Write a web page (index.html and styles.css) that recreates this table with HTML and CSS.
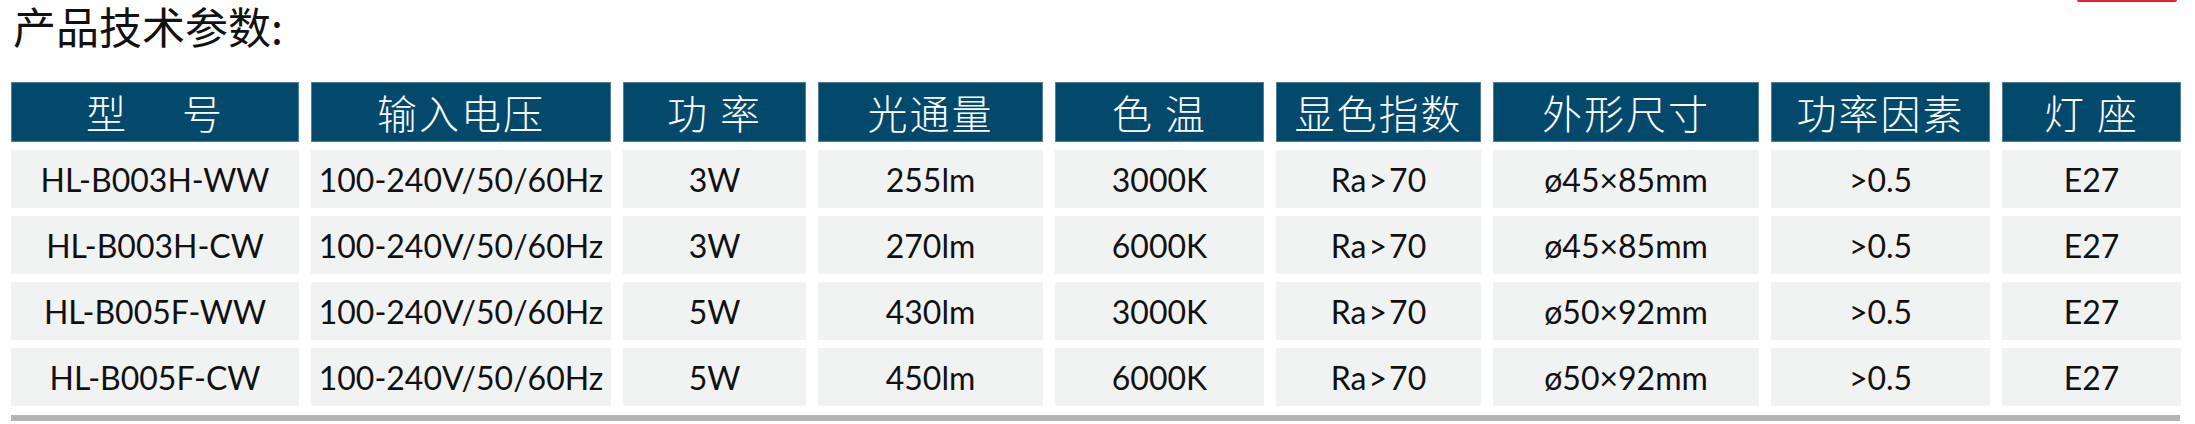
FILE: index.html
```html
<!DOCTYPE html>
<html lang="zh">
<head>
<meta charset="utf-8">
<title>产品技术参数</title>
<link rel="stylesheet" href="styles.css">
</head>
<body>
<div class="page">
  <div class="top">
    <h2 class="title">产品技术参数:</h2>
    <span class="accent"></span>
  </div>
  <div class="spec">
    <div class="row head">
      <div class="cell">型&nbsp;&nbsp;&nbsp;&nbsp;&nbsp;号</div>
      <div class="cell">输入电压</div>
      <div class="cell">功&nbsp;率</div>
      <div class="cell">光通量</div>
      <div class="cell">色&nbsp;温</div>
      <div class="cell">显色指数</div>
      <div class="cell">外形尺寸</div>
      <div class="cell">功率因素</div>
      <div class="cell">灯&nbsp;座</div>
    </div>
    <div class="row data">
      <div class="cell">HL-B003H-WW</div>
      <div class="cell">100-240V/50/60Hz</div>
      <div class="cell">3W</div>
      <div class="cell">255lm</div>
      <div class="cell">3000K</div>
      <div class="cell">Ra&#8202;&gt;&#8202;70</div>
      <div class="cell">ø45×85mm</div>
      <div class="cell">&gt;0.5</div>
      <div class="cell">E27</div>
    </div>
    <div class="row data">
      <div class="cell">HL-B003H-CW</div>
      <div class="cell">100-240V/50/60Hz</div>
      <div class="cell">3W</div>
      <div class="cell">270lm</div>
      <div class="cell">6000K</div>
      <div class="cell">Ra&#8202;&gt;&#8202;70</div>
      <div class="cell">ø45×85mm</div>
      <div class="cell">&gt;0.5</div>
      <div class="cell">E27</div>
    </div>
    <div class="row data">
      <div class="cell">HL-B005F-WW</div>
      <div class="cell">100-240V/50/60Hz</div>
      <div class="cell">5W</div>
      <div class="cell">430lm</div>
      <div class="cell">3000K</div>
      <div class="cell">Ra&#8202;&gt;&#8202;70</div>
      <div class="cell">ø50×92mm</div>
      <div class="cell">&gt;0.5</div>
      <div class="cell">E27</div>
    </div>
    <div class="row data">
      <div class="cell">HL-B005F-CW</div>
      <div class="cell">100-240V/50/60Hz</div>
      <div class="cell">5W</div>
      <div class="cell">450lm</div>
      <div class="cell">6000K</div>
      <div class="cell">Ra&#8202;&gt;&#8202;70</div>
      <div class="cell">ø50×92mm</div>
      <div class="cell">&gt;0.5</div>
      <div class="cell">E27</div>
    </div>
    <div class="rule"></div>
  </div>
</div>
</body>
</html>
```

FILE: styles.css
```css
html, body {
  margin: 0;
  padding: 0;
  background: #ffffff;
}

.page {
  padding: 0 15px 0 11px;
  width: 2169px;
}

.top {
  display: flex;
  justify-content: space-between;
  align-items: flex-start;
  height: 82px;
}

.title {
  margin: 0 0 0 2px;
  font-family: "Noto Sans CJK SC", "Noto Sans", sans-serif;
  font-size: 43px;
  font-weight: 400;
  line-height: 50px;
  color: #111111;
}

.accent {
  display: block;
  width: 100px;
  height: 2px;
  margin-right: 3px;
  background: #e3232c;
  border-radius: 0 0 2px 2px;
}

.spec {
  display: flex;
  flex-direction: column;
  gap: 8px;
}

.row {
  display: grid;
  grid-template-columns: 288px 300px 183px 225px 209px 205px 266px 219px 179px;
  column-gap: 12px;
}

.head {
  height: 59px;
  margin-bottom: 1px;
}

.head .cell {
  background: #03496c;
  border: 1px solid #4f7f9c;
  color: #ffffff;
  font-family: "Noto Sans CJK SC", "Noto Sans", sans-serif;
  font-size: 40px;
  font-weight: 300;
  letter-spacing: 2px;
}

.data {
  height: 58px;
}

.data .cell {
  background: #f1f2f2;
  color: #111111;
  font-family: Lato, "Open Sans", sans-serif;
  font-size: 32px;
}

.cell {
  display: flex;
  align-items: center;
  justify-content: center;
  white-space: nowrap;
  box-sizing: border-box;
}

.rule {
  height: 6px;
  margin-top: 1px;
  background: #b4b4b4;
}
```
